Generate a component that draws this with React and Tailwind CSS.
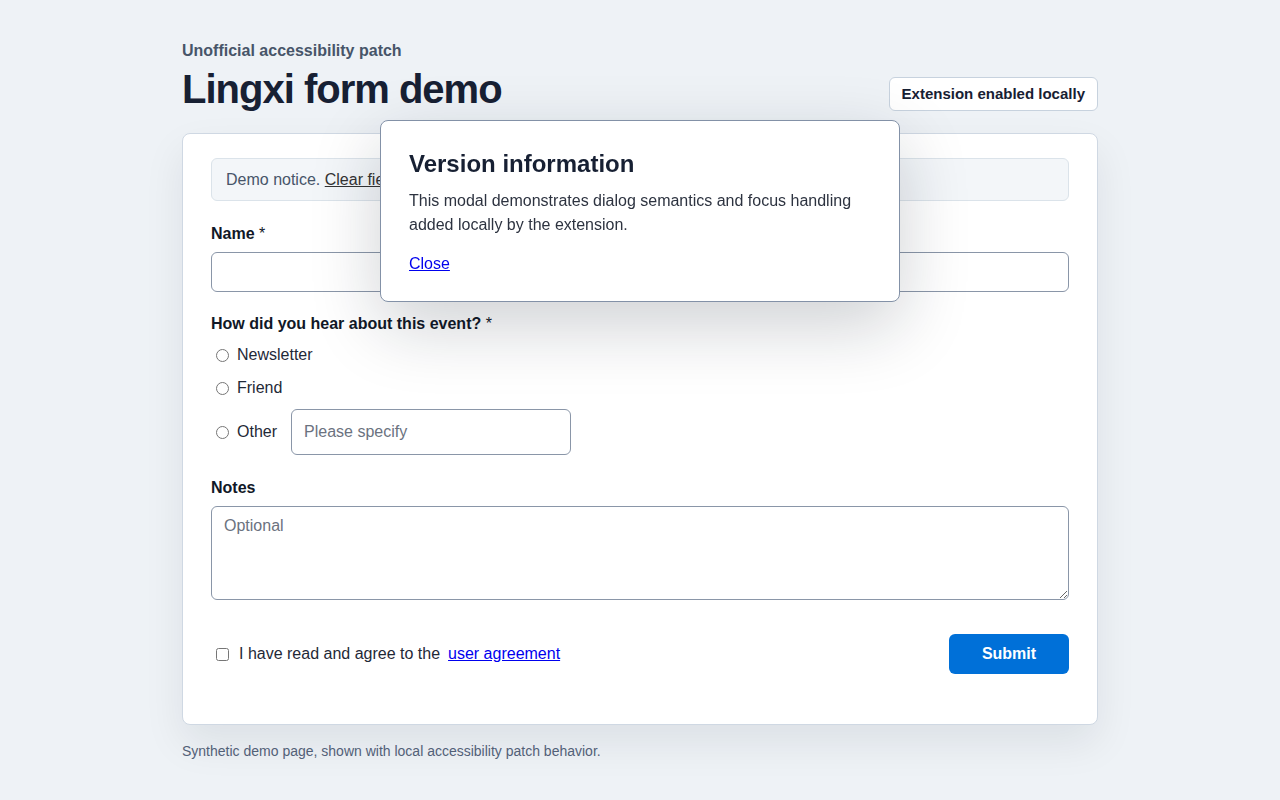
import React from "react";

function App() {
  return (
    <div
      className="min-h-screen bg-[#eef2f6] text-[#1f2937]"
      style={{ fontFamily: '"Liberation Sans", Arial, sans-serif' }}
    >
      <div className="w-[916px] mx-auto pt-10 pb-10">
        {/* Header */}
        <div className="flex items-end justify-between">
          <div>
            <p className="mt-px text-base leading-5 font-bold text-[#475569]">
              Unofficial accessibility patch
            </p>
            <h1 className="mt-1 text-[40px] leading-[48px] tracking-[-1px] font-bold text-[#172033]">
              Lingxi form demo
            </h1>
          </div>
          <span className="mb-[2px] h-[34px] px-3 flex items-center bg-white border border-[#c7d2de] rounded-md text-[15px] font-bold text-[#172033]">
            Extension enabled locally
          </span>
        </div>

        {/* Form card */}
        <div className="mt-5 bg-white border border-[#cfd8e3] rounded-lg px-7 pt-6 pb-[50px] shadow-[0_18px_40px_rgba(15,23,42,0.08)]">
          <div className="bg-[#f3f6f9] border border-[#dbe3ea] rounded-md px-[14px] py-[10px] text-base leading-[21px] text-[#475569]">
            Demo notice.{" "}
            <span className="underline text-[#333]">Clear fields</span> before
            submitting.
          </div>

          <label className="block mt-[23px] text-base leading-5 font-bold text-[#111827]">
            Name <span className="font-normal">*</span>
          </label>
          <input
            type="text"
            className="mt-2 w-full h-10 border border-[#8a96a8] rounded-md px-3 text-base outline-none"
          />

          <p className="mt-[22px] text-base leading-5 font-bold text-[#111827]">
            How did you hear about this event?{" "}
            <span className="font-normal">*</span>
          </p>
          <div className="mt-[9px] flex flex-col">
            <label className="flex items-center h-6 text-base text-[#1f2937]">
              <input type="radio" name="src" className="ml-[5px] mr-2" />
              Newsletter
            </label>
            <label className="mt-[9px] flex items-center h-6 text-base text-[#1f2937]">
              <input type="radio" name="src" className="ml-[5px] mr-2" />
              Friend
            </label>
            <div className="mt-[9px] flex items-center">
              <label className="flex items-center text-base text-[#1f2937]">
                <input type="radio" name="src" className="ml-[5px] mr-2" />
                Other
              </label>
              <input
                type="text"
                placeholder="Please specify"
                className="ml-[14px] w-[280px] h-[46px] border border-[#8a96a8] rounded-md px-3 text-base placeholder:text-[#6b7280] outline-none"
              />
            </div>
          </div>

          <label className="block mt-[23px] text-base leading-5 font-bold text-[#111827]">
            Notes
          </label>
          <textarea
            placeholder="Optional"
            className="block mt-2 w-full h-[94px] border border-[#8a96a8] rounded-md px-3 py-[7px] text-base placeholder:text-[#6b7280] outline-none"
          />

          <div className="mt-[34px] flex items-center justify-between">
            <label className="flex items-center text-base text-[#1f2937]">
              <input type="checkbox" className="ml-[5px] mr-[10px] w-[13px] h-[13px]" />
              I have read and agree to the
              <a href="#" className="ml-2 text-[#0000ee] underline">
                user agreement
              </a>
            </label>
            <button className="w-[120px] h-10 bg-[#0070d8] rounded-md text-white text-base font-bold">
              Submit
            </button>
          </div>
        </div>

        <p className="mt-4 text-sm leading-5 text-[#526077]">
          Synthetic demo page, shown with local accessibility patch behavior.
        </p>
      </div>

      {/* Modal */}
      <div
        role="dialog"
        className="fixed top-[120px] left-[380px] w-[520px] bg-white border border-[#8391a7] rounded-lg px-7 pt-[27px] pb-[25px] shadow-[0_24px_70px_rgba(15,23,42,0.2)]"
      >
        <h2 className="text-2xl leading-8 font-bold text-[#172033]">
          Version information
        </h2>
        <p className="mt-[9px] text-base leading-6 text-[#2d3340]">
          This modal demonstrates dialog semantics and focus handling added
          locally by the extension.
        </p>
        <a href="#" className="block mt-[15px] leading-6 text-[#0000ee] underline">
          Close
        </a>
      </div>
    </div>
  );
}

export default App;
